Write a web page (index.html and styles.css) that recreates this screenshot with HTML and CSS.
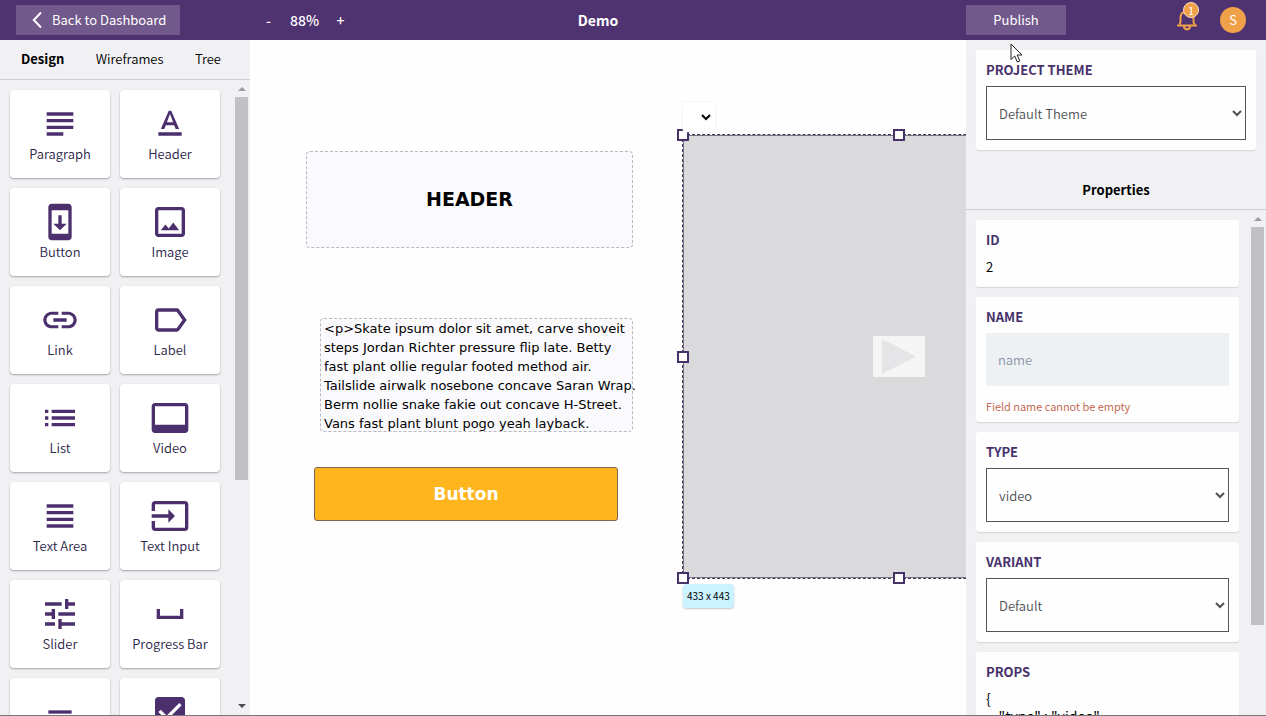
FILE: index.html
```html
<!DOCTYPE html>
<html lang="en">
<head>
<meta charset="utf-8">
<title>Demo</title>
<link rel="stylesheet" href="styles.css">
</head>
<body>
<div class="app">
  <header class="topbar">
    <div class="topbar-left">
      <a class="bar-button" href="#dashboard"><svg class="chevron" viewBox="0 0 10 18"><path d="M9 1.500L1.800 9L9 16.500"/></svg>Back to Dashboard</a>
    </div>
    <div class="topbar-middle">
      <div class="zoom"><button type="button">-</button><span>88%</span><button type="button">+</button></div>
      <h1 class="title">Demo</h1>
    </div>
    <div class="topbar-right">
      <button class="bar-button publish" type="button">Publish</button>
      <div class="account">
        <button class="bell" type="button" aria-label="Notifications">
          <svg viewBox="0 0 22 24"><path d="M3.500 16.500C5 14.500 4.500 12 4.500 10C4.500 6 7 3.500 11 3.500S17.500 6 17.500 10C17.500 12 17 14.500 18.500 16.500M1 17.500H21M8 18C8 22.500 14 22.500 14 18"/></svg>
          <span class="badge">1</span>
        </button>
        <button class="avatar" type="button">S</button>
      </div>
    </div>
  </header>
  <div class="workspace">
    <aside class="palette">
      <nav class="tabs"><button class="active" type="button">Design</button><button type="button">Wireframes</button><button type="button">Tree</button></nav>
      <div class="scroller">
        <div class="tiles">
          <button class="tile" type="button"><svg viewBox="0 0 24 24"><path d="M14 17H4v2h10v-2zm6-8H4v2h16V9zM4 15h16v-2H4v2zM4 5v2h16V5H4z"/></svg>Paragraph</button>
          <button class="tile" type="button"><svg viewBox="0 0 24 24"><path d="M5 17v2h14v-2H5zm4.500-4.200h5l.9 2.200h2.100L12.750 4h-1.500L6.500 15h2.100l.9-2.200zM12 5.980L13.870 11h-3.740L12 5.980z"/></svg>Header</button>
          <button class="tile" type="button"><svg viewBox="0 0 24 24"><path d="M17 1.010L7 1c-1.100 0-2 .9-2 2v18c0 1.100.9 2 2 2h10c1.100 0 2-.9 2-2V3c0-1.100-.9-1.990-2-1.990zM17 19H7V5h10v14zm-1-6h-3V8h-2v5H8l4 4 4-4z"/></svg>Button</button>
          <button class="tile" type="button"><svg viewBox="0 0 24 24"><path d="M19 5v14H5V5h14m0-2H5c-1.100 0-2 .9-2 2v14c0 1.100.9 2 2 2h14c1.100 0 2-.9 2-2V5c0-1.100-.9-2-2-2zm-5.040 9.290l-2.750 3.540-1.960-2.360L6.500 17h11l-3.540-4.710z"/></svg>Image</button>
          <button class="tile" type="button"><svg viewBox="0 0 24 24"><path d="M3.900 12c0-1.710 1.390-3.100 3.100-3.100h4V7H7c-2.760 0-5 2.240-5 5s2.240 5 5 5h4v-1.900H7c-1.710 0-3.100-1.390-3.100-3.100zM8 13h8v-2H8v2zm9-6h-4v1.900h4c1.710 0 3.100 1.390 3.100 3.100s-1.390 3.100-3.100 3.100h-4V17h4c2.760 0 5-2.240 5-5s-2.240-5-5-5z"/></svg>Link</button>
          <button class="tile" type="button"><svg viewBox="0 0 24 24"><path d="M17.630 5.840C17.270 5.330 16.670 5 16 5L5 5.010C3.900 5.010 3 5.900 3 7v10c0 1.100.9 1.990 2 1.990L16 19c.67 0 1.270-.33 1.630-.84L22 12l-4.370-6.160zM16 17H5V7h11l3.550 5L16 17z"/></svg>Label</button>
          <button class="tile" type="button"><svg viewBox="0 0 24 24"><path d="M3 13h2v-2H3v2zm0 4h2v-2H3v2zm0-8h2V7H3v2zm4 4h14v-2H7v2zm0 4h14v-2H7v2zM7 7v2h14V7H7z"/></svg>List</button>
          <button class="tile" type="button"><svg viewBox="0 0 24 24"><path d="M21 3H3c-1.100 0-2 .9-2 2v14c0 1.100.9 2 2 2h18c1.100 0 2-.9 2-2V5c0-1.100-.9-2-2-2zm0 13H3V5h18v11z"/></svg>Video</button>
          <button class="tile" type="button"><svg viewBox="0 0 24 24"><path d="M4 15h16v-2H4v2zm0 4h16v-2H4v2zm0-8h16V9H4v2zm0-6v2h16V5H4z"/></svg>Text Area</button>
          <button class="tile" type="button"><svg viewBox="0 0 24 24"><path d="M21 3.010H3c-1.100 0-2 .9-2 2V9h2V4.990h18v14.030H3V15H1v4.010c0 1.100.9 1.980 2 1.980h18c1.100 0 2-.88 2-1.980v-14c0-1.110-.9-2-2-2zM11 16l4-4-4-4v3H1v2h10v3z"/></svg>Text Input</button>
          <button class="tile" type="button"><svg viewBox="0 0 24 24"><path d="M3 17v2h6v-2H3zM3 5v2h10V5H3zm10 16v-2h8v-2h-8v-2h-2v6h2zM7 9v2H3v2h4v2h2V9H7zm14 4v-2H11v2h10zm-6-4h2V7h4V5h-4V3h-2v6z"/></svg>Slider</button>
          <button class="tile" type="button"><svg viewBox="0 0 24 24"><path d="M18 9v4H6V9H4v6h16V9z"/></svg>Progress Bar</button>
          <button class="tile" type="button" aria-label="Divider"><svg viewBox="0 0 24 24"><path d="M19 13H5v-2h14v2z"/></svg></button>
          <button class="tile" type="button" aria-label="Checkbox"><svg viewBox="0 0 24 24"><path d="M19 3H5c-1.110 0-2 .9-2 2v14c0 1.100.89 2 2 2h14c1.110 0 2-.9 2-2V5c0-1.100-.89-2-2-2zm-9 14l-5-5 1.410-1.410L10 14.170l7.590-7.590L19 8l-9 9z"/></svg></button>
        </div>
        <div class="scrollbar palette-bar"><i class="arrow up"></i><i class="thumb"></i><i class="arrow down"></i></div>
      </div>
    </aside>

    <main class="canvas">
      <h2 class="node node-header">HEADER</h2>
      <p class="node node-text">&lt;p&gt;Skate ipsum dolor sit amet, carve shoveit<br>steps Jordan Richter pressure flip late. Betty<br>fast plant ollie regular footed method air.<br>Tailslide airwalk nosebone concave Saran Wrap.<br>Berm nollie snake fakie out concave H-Street.<br>Vans fast plant blunt pogo yeah layback.</p>
      <button class="node node-button" type="button">Button</button>
      <div class="node node-video">
        <svg class="play" viewBox="0 0 52 41">
          <defs><pattern id="check" width="2" height="2" patternUnits="userSpaceOnUse"><path d="M0 0h1v1H0zM1 1h1v1H1z" fill="#efeff0"/></pattern></defs>
          <path d="M0 0h52v41H0z" fill="#fbfbfb"/><path d="M0 0h52v41H0z" fill="url(#check)"/><path d="M9 3L43 20.500L9 38z" fill="#e5e5e7"/>
        </svg>
        <i class="handle top left"></i><i class="handle top center"></i><i class="handle middle left"></i><i class="handle bottom left"></i><i class="handle bottom center"></i>
        <button class="node-menu" type="button" aria-label="Element menu"><svg viewBox="0 0 10 7"><path d="M1 1l4 4l4-4"/></svg></button>
        <span class="size">433 x 443</span>
      </div>
    </main>

    <aside class="inspector">
      <section class="theme card"><label for="theme">PROJECT THEME</label><select id="theme"><option>Default Theme</option></select></section>
      <h2 class="inspector-title">Properties</h2>
      <div class="scroller">
        <div class="fields">
          <section class="card"><h3>ID</h3><p class="value">2</p></section>
          <section class="card"><label for="name">NAME</label><input id="name" type="text" placeholder="name"><p class="error">Field name cannot be empty</p></section>
          <section class="card"><label for="type">TYPE</label><select id="type"><option>video</option></select></section>
          <section class="card"><label for="variant">VARIANT</label><select id="variant"><option>Default</option></select></section>
          <section class="card"><h3>PROPS</h3><pre class="props">{
    "type" : "video"
}</pre></section>
        </div>
        <div class="scrollbar inspector-bar"><i class="arrow up"></i><i class="thumb"></i></div>
      </div>
    </aside>
  </div>
  <svg class="cursor" viewBox="0 0 13 20"><path d="M1 1V16.500L4.700 13L7.300 19L9.800 18L7.200 12H12z"/></svg>
</div>
</body>
</html>
```
FILE: styles.css
```css
* { box-sizing: border-box; }
body { margin: 0; font: 350 13px/20px "Noto Sans CJK JP", "Noto Sans CJK SC", sans-serif; color: #000; }
button, input, select { font: inherit; color: inherit; }
button { border: 0; padding: 0; background: none; }
h1, h2, h3, p, pre { margin: 0; font: inherit; }
svg { display: block; }

.app { display: flex; flex-direction: column; height: 100vh; border-bottom: 1px solid #77757b; overflow: hidden; }

.topbar { display: grid; grid-template-columns: 250px 1fr 300px; align-items: center; height: 40px; flex: none; background: #4f3270; color: #fff; font-weight: 400; }
.topbar-left { padding-left: 16px; display: flex; }
.bar-button { display: flex; align-items: center; height: 30px; padding: 0 14px 0 16px; background: #71598c; color: #fff; text-decoration: none; }
.chevron { width: 10px; height: 18px; margin-right: 10px; fill: none; stroke: #fff; stroke-width: 2; }
.topbar-middle { display: grid; grid-template-columns: 1fr auto 1fr; padding: 0 34px 0 14px; font-size: 14px; }
.zoom { display: flex; gap: 17px; font-weight: 500; }
.zoom button { width: 9px; }
.title { font-weight: 700; }
.topbar-right { display: flex; justify-content: space-between; align-items: center; padding-right: 20px; }
.publish { width: 100px; padding: 0; justify-content: center; }
.account { display: flex; align-items: center; gap: 22px; }
.bell { position: relative; }
.bell svg { width: 22px; height: 24px; fill: none; stroke: #f1a04a; stroke-width: 2; }
.badge { position: absolute; top: -6px; left: 7px; width: 16px; height: 16px; border: 1px solid #f8dcc0; border-radius: 50%; background: #f1a04a; font-size: 11px; line-height: 14px; text-align: center; }
.avatar { width: 26px; height: 26px; border-radius: 50%; background: #f1a04a; }

.workspace { display: flex; flex: 1; min-height: 0; }
.palette, .inspector { display: flex; flex-direction: column; flex: none; background: #f1f1f4; }
.palette { width: 250px; }
.inspector { width: 300px; }
.tabs { display: flex; justify-content: space-between; flex: none; height: 40px; padding: 0 29px 2px 21px; border-bottom: 1px solid #ceced2; }
.tabs .active { font-weight: 700; }
.scroller { display: flex; justify-content: space-between; flex: 1; min-height: 0; overflow: hidden; }
.tiles { display: grid; grid-template-columns: 100px 100px; grid-auto-rows: 88px; gap: 10px; padding: 10px; }
.tile { display: flex; flex-direction: column; align-items: center; padding-top: 14px; background: #fff; border-radius: 4px; box-shadow: 0 1px 2px #a3a3a8; color: #2c2549; }
.tile svg { width: 40px; height: 40px; fill: #4b306d; }

.scrollbar { display: flex; flex-direction: column; align-items: center; flex: none; width: 13px; margin-right: 2px; padding-top: 7px; }
.arrow { flex: none; border: 4px solid transparent; border-top: 0; border-bottom-color: #9b9b9f; }
.arrow.down { border-top: 4px solid #4e4e54; border-bottom: 0; margin-top: auto; margin-bottom: 7px; }
.thumb { flex: none; width: 13px; margin-top: 6px; background: #c1c1c3; }
.palette-bar .thumb { height: 61%; }
.inspector-bar .thumb { height: 80%; }

.canvas { position: relative; flex: 1; min-width: 0; overflow: hidden; background: #fefefe; }
.node { position: absolute; font-family: Verdana, "DejaVu Sans", sans-serif; font-weight: 400; }
.node-header, .node-text { border: 1px dashed #b9b9c1; border-radius: 4px; background: #fafafd; }
.node-header { left: 56px; top: 111px; width: 327px; height: 97px; font-size: 19px; font-weight: 700; line-height: 95px; text-align: center; }
.node-text { left: 70px; top: 278px; width: 313px; height: 114px; padding-left: 3px; font-size: 13px; line-height: 19px; white-space: nowrap; }
.node-button { left: 64px; top: 427px; width: 304px; height: 54px; border: 1px solid #7b6550; border-radius: 3px; background: #ffb51e; color: #fff; font-size: 17px; font-weight: 700; }
.node-video { left: 433px; top: 95px; width: 433px; height: 443px; background: #dadadc; outline: 1px dashed #3f3560; border: 1px solid #77747d; font-family: inherit; }
.play { position: absolute; left: 189px; top: 200px; width: 52px; height: 41px; }
.handle { position: absolute; width: 12px; height: 12px; border: 2px solid #463269; background: #fff; }
.top { top: -7px; }
.middle { top: 215px; }
.bottom { bottom: -7px; }
.left { left: -7px; }
.center { left: 209px; }
.node-menu { position: absolute; left: -1px; top: -34px; width: 32px; height: 30px; padding-left: 18px; border-radius: 2px; background: #fff; box-shadow: 0 0 2px #dedee8; }
.node-menu svg { width: 10px; height: 7px; fill: none; stroke: #000; stroke-width: 2; }
.size { position: absolute; left: -1px; top: 448px; padding: 2px 4px; border-radius: 4px; background: #cbf3ff; box-shadow: 0 1px 2px #c0c5ca; font-size: 10px; white-space: nowrap; }

.card { padding: 10px; border-radius: 3px; background: #fefefe; box-shadow: 0 1px 1px #d5d5d8; }
.theme { margin: 10px 10px 0; }
.card label, .card h3 { display: block; font-weight: 700; color: #46316b; }
.card select, .card input { display: block; width: 100%; margin-top: 6px; border-radius: 0; }
.card select { height: 54px; padding: 0 1px 0 8px; border: 1px solid #55555b; background: #fefefe; color: #505056; }
.card input { height: 53px; padding: 0 12px; border: 0; background: #edf1f4; }
.card input::placeholder { color: #8b91a4; opacity: 1; }
.value { margin-top: 7px; font-weight: 400; }
.error { margin-top: 14px; font-size: 11px; line-height: 12px; color: #c05a44; }
.inspector-title { flex: none; margin-top: 30px; padding-bottom: 9px; border-bottom: 1px solid #ceced2; font-weight: 700; text-align: center; }
.fields { display: flex; flex-direction: column; gap: 10px; flex: 1; padding: 10px 12px 10px 10px; }
.fields .card { flex: none; }
.props { margin-top: 7px; font-family: inherit; font-size: 14px; font-weight: 400; line-height: 18px; }

.cursor { position: absolute; left: 1010px; top: 43px; width: 13px; height: 20px; fill: #fff; stroke: #222; stroke-width: 1; }
```
